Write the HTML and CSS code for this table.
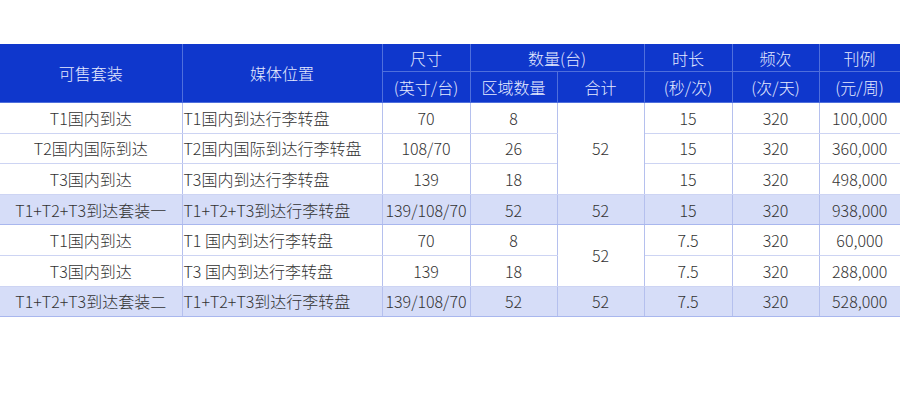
FILE: index.html
```html
<!DOCTYPE html>
<html lang="zh">
<head>
<meta charset="utf-8">
<link rel="stylesheet" href="styles.css">
</head>
<body>
<div class="page">
<table class="rate">
  <colgroup>
    <col class="c1"><col class="c2"><col class="c3"><col class="c4"><col class="c5"><col class="c6"><col class="c7"><col class="c8">
  </colgroup>
  <thead>
    <tr class="h1">
      <th rowspan="2">可售套装</th>
      <th rowspan="2">媒体位置</th>
      <th>尺寸</th>
      <th colspan="2">数量(台)</th>
      <th>时长</th>
      <th>频次</th>
      <th>刊例</th>
    </tr>
    <tr class="h2">
      <th>(英寸/台)</th>
      <th>区域数量</th>
      <th>合计</th>
      <th>(秒/次)</th>
      <th>(次/天)</th>
      <th>(元/周)</th>
    </tr>
  </thead>
  <tbody>
    <tr>
      <td>T1国内到达</td><td class="left">T1国内到达行李转盘</td><td>70</td><td>8</td><td rowspan="3" class="sum">52</td><td>15</td><td>320</td><td>100,000</td>
    </tr>
    <tr>
      <td>T2国内国际到达</td><td class="left">T2国内国际到达行李转盘</td><td>108/70</td><td>26</td><td>15</td><td>320</td><td>360,000</td>
    </tr>
    <tr>
      <td>T3国内到达</td><td class="left">T3国内到达行李转盘</td><td>139</td><td>18</td><td>15</td><td>320</td><td>498,000</td>
    </tr>
    <tr class="pack">
      <td>T1+T2+T3到达套装一</td><td class="left">T1+T2+T3到达行李转盘</td><td>139/108/70</td><td>52</td><td>52</td><td>15</td><td>320</td><td>938,000</td>
    </tr>
    <tr>
      <td>T1国内到达</td><td class="left">T1 国内到达行李转盘</td><td>70</td><td>8</td><td rowspan="2" class="sum">52</td><td>7.5</td><td>320</td><td>60,000</td>
    </tr>
    <tr>
      <td>T3国内到达</td><td class="left">T3 国内到达行李转盘</td><td>139</td><td>18</td><td>7.5</td><td>320</td><td>288,000</td>
    </tr>
    <tr class="pack">
      <td>T1+T2+T3到达套装二</td><td class="left">T1+T2+T3到达行李转盘</td><td>139/108/70</td><td>52</td><td>52</td><td>7.5</td><td>320</td><td>528,000</td>
    </tr>
  </tbody>
</table>
</div>
</body>
</html>
```
FILE: styles.css
```css
html, body {
  margin: 0;
  padding: 0;
  background: #ffffff;
}
.page {
  padding-top: 44px;
}
.rate {
  width: 900px;
  table-layout: fixed;
  border-collapse: collapse;
  font-family: "Noto Sans CJK SC", "Noto Sans", sans-serif;
  font-size: 16px;
  font-weight: 300;
  color: #333333;
}
.c1 { width: 182px; }
.c2 { width: 200px; }
.c3 { width: 88px; }
.c4 { width: 87px; }
.c5 { width: 87px; }
.c6 { width: 88px; }
.c7 { width: 87px; }
.c8 { width: 81px; }
.rate th {
  background: #0f37cc;
  color: #e6ebff;
  font-weight: 300;
  padding: 0;
  border: 1px solid #4f6fdc;
  text-align: center;
}
.rate thead tr:first-child th { border-top: none; }
.rate th:first-child { border-left: none; }
.h1 th { height: 27px; }
.h2 th { height: 30px; }
.rate td {
  height: 29.6px;
  padding: 0;
  text-align: center;
  white-space: nowrap;
  border-top: 1px solid #cdd4f3;
  border-bottom: 1px solid #cdd4f3;
  border-left: 1px solid #b5c0ee;
  border-right: 1px solid #b5c0ee;
}
.rate td:first-child { border-left: none; }
.rate td:last-child { border-right: none; }
.rate td.left {
  text-align: left;
  padding-left: 1px;
  border-left: 1px solid #8fa0e6;
}
.rate tr.pack td {
  background: #d6ddf8;
  border-top: 1px solid #a9b7ee;
  border-bottom: 1px solid #a9b7ee;
}
.rate td.sum { background: #ffffff; }
```
